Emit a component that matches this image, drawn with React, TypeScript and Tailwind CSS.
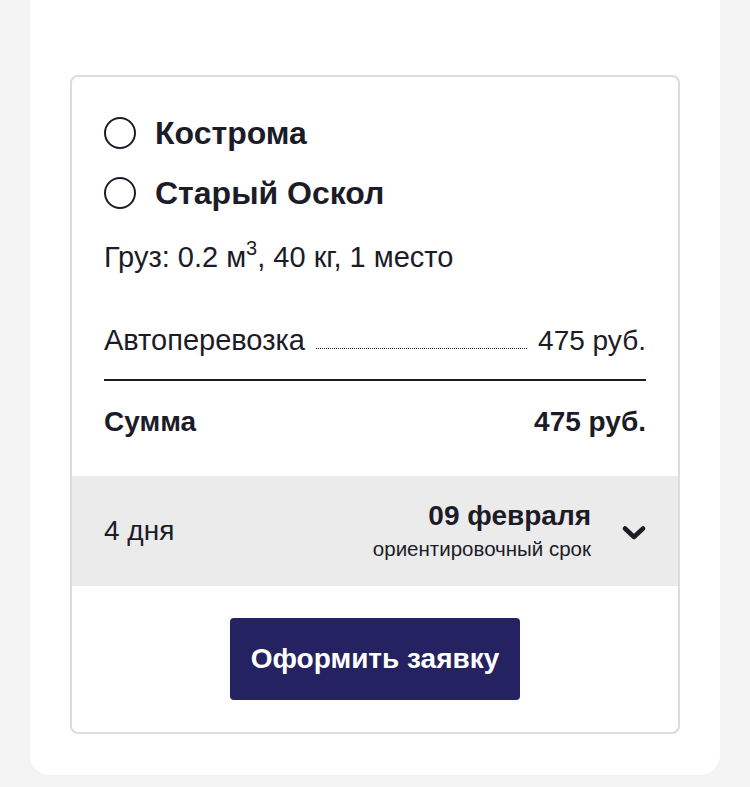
import React from 'react';

function Radio({ label }: { label: string }) {
  return (
    <label className="flex items-center h-[40px] cursor-pointer">
      <span className="w-[32px] h-[32px] rounded-full border-2 border-[#1c1c28] bg-white shrink-0" />
      <span className="ml-[19px] text-[32px] font-bold leading-[40px]">{label}</span>
    </label>
  );
}

export default function App() {
  return (
    <div
      className="min-h-[787px] bg-[#f3f3f3] text-[#1c1c28]"
      style={{ fontFamily: '"Liberation Sans", Arial, sans-serif' }}
    >
      <div className="mx-[30px] bg-white rounded-b-[20px] pt-[75px] pb-[41px] px-[40px]">
        <div className="border-2 border-[#dcdcdc] rounded-[8px] overflow-hidden">
          <div className="px-[32px] pt-[36px]">
            <Radio label="Кострома" />
            <div className="mt-[20px]">
              <Radio label="Старый Оскол" />
            </div>

            <p className="mt-[26px] text-[29px] leading-[36px] h-[36px]">
              Груз: 0.2 м<sup className="text-[20px] leading-none relative top-[-12px]">3</sup>, 40 кг, 1 место
            </p>

            <div className="mt-[47px] flex items-baseline text-[28px] leading-[36px]">
              <span className="text-[29px]">Автоперевозка</span>
              <span className="flex-1 mx-[11px] border-b border-dotted border-[#1c1c28] translate-y-[-1px]" />
              <span>475 руб.</span>
            </div>

            <div className="mt-[20px] h-[2px] bg-[#1c1c28]" />

            <div className="mt-[23px] flex justify-between text-[28px] leading-[36px] font-bold">
              <span>Сумма</span>
              <span>475 руб.</span>
            </div>
          </div>

          <div className="mt-[36px] h-[110px] bg-[#ebebeb] px-[32px] flex items-center">
            <span className="text-[28px] leading-[36px] flex-1">4 дня</span>
            <div className="flex flex-col items-end">
              <span className="text-[28px] font-bold leading-[32px]">09 февраля</span>
              <span className="text-[20.5px] leading-[26px] mt-[4px]">ориентировочный срок</span>
            </div>
            <svg
              className="ml-[31px] mt-[4px]"
              width="24"
              height="16"
              viewBox="0 0 24 16"
              fill="none"
            >
              <path
                d="M3 3.5 L12 12 L21 3.5"
                stroke="#1c1c28"
                strokeWidth="4.5"
                strokeLinecap="round"
                strokeLinejoin="round"
              />
            </svg>
          </div>

          <div className="flex justify-center pt-[32px] pb-[32px]">
            <button className="w-[290px] h-[82px] rounded-[4px] bg-[#252262] text-white text-[28px] font-bold">
              Оформить заявку
            </button>
          </div>
        </div>
      </div>
    </div>
  );
}
